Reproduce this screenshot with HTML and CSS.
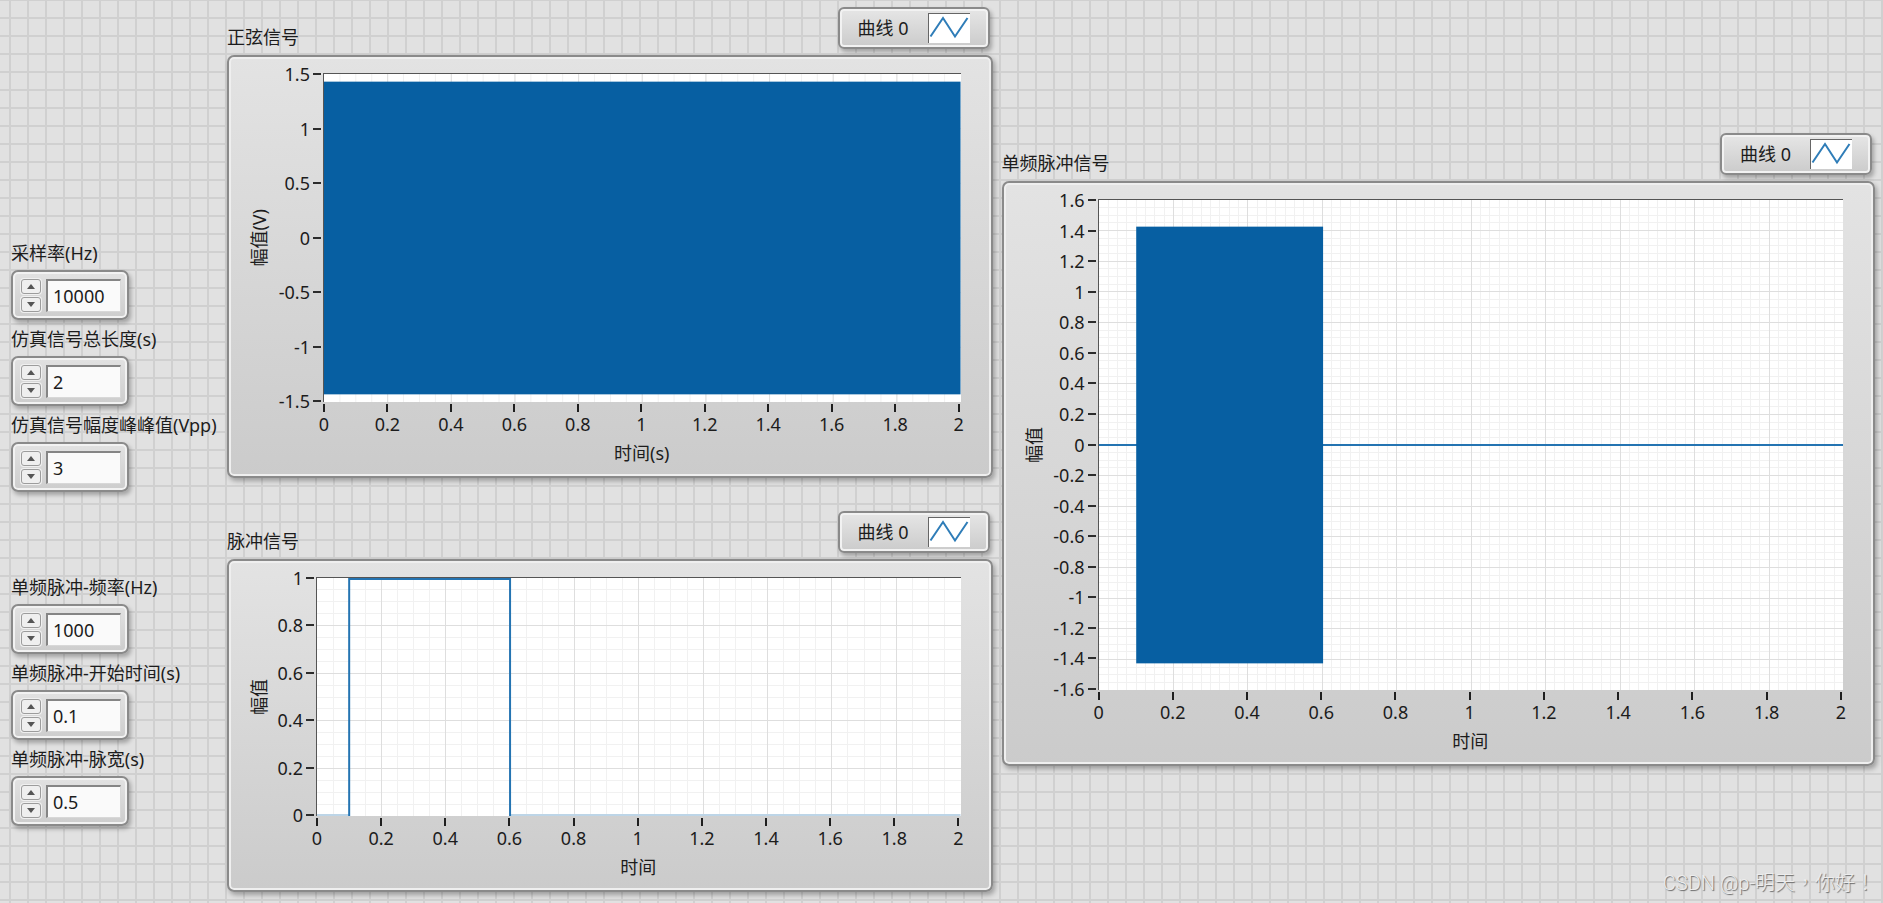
FILE: index.html
```html
<!DOCTYPE html>
<html lang="zh-CN">
<head>
<meta charset="utf-8">
<title>单频脉冲信号</title>
<link rel="stylesheet" href="styles.css">
</head>
<body>
<main class="front-panel">
  <form class="controls">
    <div class="control-group">
      <div class="control">
        <label for="rate">采样率(Hz)</label>
        <div class="numeric">
          <div class="spinner"><button type="button" class="up" aria-label="增加"></button><button type="button" class="down" aria-label="减少"></button></div>
          <input id="rate" type="text" value="10000">
        </div>
      </div>
      <div class="control">
        <label for="length">仿真信号总长度(s)</label>
        <div class="numeric">
          <div class="spinner"><button type="button" class="up" aria-label="增加"></button><button type="button" class="down" aria-label="减少"></button></div>
          <input id="length" type="text" value="2">
        </div>
      </div>
      <div class="control">
        <label for="vpp">仿真信号幅度峰峰值(Vpp)</label>
        <div class="numeric">
          <div class="spinner"><button type="button" class="up" aria-label="增加"></button><button type="button" class="down" aria-label="减少"></button></div>
          <input id="vpp" type="text" value="3">
        </div>
      </div>
    </div>
    <div class="control-group">
      <div class="control">
        <label for="freq">单频脉冲-频率(Hz)</label>
        <div class="numeric">
          <div class="spinner"><button type="button" class="up" aria-label="增加"></button><button type="button" class="down" aria-label="减少"></button></div>
          <input id="freq" type="text" value="1000">
        </div>
      </div>
      <div class="control">
        <label for="start">单频脉冲-开始时间(s)</label>
        <div class="numeric">
          <div class="spinner"><button type="button" class="up" aria-label="增加"></button><button type="button" class="down" aria-label="减少"></button></div>
          <input id="start" type="text" value="0.1">
        </div>
      </div>
      <div class="control">
        <label for="width">单频脉冲-脉宽(s)</label>
        <div class="numeric">
          <div class="spinner"><button type="button" class="up" aria-label="增加"></button><button type="button" class="down" aria-label="减少"></button></div>
          <input id="width" type="text" value="0.5">
        </div>
      </div>
    </div>
  </form>

  <div class="column">
    <section class="graph graph-sine">
      <header class="graph-head">
        <h2>正弦信号</h2>
        <div class="legend"><span>曲线 0</span><svg class="legend-line" viewBox="0 0 41 29" aria-hidden="true"><path d="M1.500 22.500L14 4L26 22.500L38.500 4"/></svg></div>
      </header>
      <div class="chart">
        <div class="y-title"><span>幅值(V)</span></div>
        <div class="y-axis"><span>1.5</span><span>1</span><span>0.5</span><span>0</span><span>-0.5</span><span>-1</span><span>-1.5</span></div>
        <div class="plot">
          <svg viewBox="0 0 2000 3000" preserveAspectRatio="none" data-x-minor="50" data-x-major="200" data-y-minor="100" data-y-major="500">
            <rect class="burst" x="0" y="70" width="2000" height="2860"/>
          </svg>
        </div>
        <div class="x-axis"><span>0</span><span>0.2</span><span>0.4</span><span>0.6</span><span>0.8</span><span>1</span><span>1.2</span><span>1.4</span><span>1.6</span><span>1.8</span><span>2</span></div>
        <div class="x-title">时间(s)</div>
      </div>
    </section>

    <section class="graph graph-pulse">
      <header class="graph-head">
        <h2>脉冲信号</h2>
        <div class="legend"><span>曲线 0</span><svg class="legend-line" viewBox="0 0 41 29" aria-hidden="true"><path d="M1.500 22.500L14 4L26 22.500L38.500 4"/></svg></div>
      </header>
      <div class="chart">
        <div class="y-title"><span>幅值</span></div>
        <div class="y-axis"><span>1</span><span>0.8</span><span>0.6</span><span>0.4</span><span>0.2</span><span>0</span></div>
        <div class="plot">
          <svg viewBox="0 0 2000 1000" preserveAspectRatio="none" data-x-minor="50" data-x-major="200" data-y-minor="50" data-y-major="200">
            <path class="base" d="M0 996H100M600 996H2000"/>
            <path class="trace" d="M100 1000V4H600V1000"/>
          </svg>
        </div>
        <div class="x-axis"><span>0</span><span>0.2</span><span>0.4</span><span>0.6</span><span>0.8</span><span>1</span><span>1.2</span><span>1.4</span><span>1.6</span><span>1.8</span><span>2</span></div>
        <div class="x-title">时间</div>
      </div>
    </section>
  </div>

  <div class="column column-result">
    <section class="graph graph-burst">
      <header class="graph-head">
        <h2>单频脉冲信号</h2>
        <div class="legend"><span>曲线 0</span><svg class="legend-line" viewBox="0 0 41 29" aria-hidden="true"><path d="M1.500 22.500L14 4L26 22.500L38.500 4"/></svg></div>
      </header>
      <div class="chart">
        <div class="y-title"><span>幅值</span></div>
        <div class="y-axis"><span>1.6</span><span>1.4</span><span>1.2</span><span>1</span><span>0.8</span><span>0.6</span><span>0.4</span><span>0.2</span><span>0</span><span>-0.2</span><span>-0.4</span><span>-0.6</span><span>-0.8</span><span>-1</span><span>-1.2</span><span>-1.4</span><span>-1.6</span></div>
        <div class="plot">
          <svg viewBox="0 0 2000 3200" preserveAspectRatio="none" data-x-minor="25" data-x-major="200" data-y-minor="50" data-y-major="200">
            <path class="trace" d="M0 1600H2000"/>
            <rect class="burst" x="100" y="174" width="502" height="2852"/>
          </svg>
        </div>
        <div class="x-axis"><span>0</span><span>0.2</span><span>0.4</span><span>0.6</span><span>0.8</span><span>1</span><span>1.2</span><span>1.4</span><span>1.6</span><span>1.8</span><span>2</span></div>
        <div class="x-title">时间</div>
      </div>
    </section>
  </div>
</main>
<footer class="signature" lang="zh-TW">CSDN @p-明天，你好！</footer>
<script src="grid.js"></script>
</body>
</html>
```
FILE: styles.css
```css
* {
  box-sizing: border-box;
}

body {
  margin: 0;
  min-height: 100vh;
  color: #1c1c1c;
  font-family: "Noto Sans", "Noto Sans CJK SC", sans-serif;
  font-size: 18px;
  line-height: 24px;
  background-color: #e1e1e1;
  background-image:
    linear-gradient(90deg, #d0d0d0 2px, transparent 2px),
    linear-gradient(#d0d0d0 2px, transparent 2px);
  background-size: 18px 18px;
  background-position: 9px 17px;
}

.front-panel {
  display: grid;
  grid-template-columns: 207px minmax(0, 766fr) minmax(0, 874fr);
  column-gap: 9px;
  padding: 0 8px 0 11px;
}

/* Numeric controls */

.controls {
  display: flex;
  flex-direction: column;
  gap: 83px;
  padding-top: 241px;
}

.control-group {
  display: flex;
  flex-direction: column;
  gap: 7px;
}

.control {
  display: flex;
  flex-direction: column;
  align-items: flex-start;
  gap: 5px;
}

.control label {
  white-space: nowrap;
}

.numeric {
  display: flex;
  gap: 5px;
  width: 118px;
  height: 50px;
  padding: 7px 6px 6px 8px;
  border: 2px solid #8a8a8a;
  border-radius: 7px;
  background: linear-gradient(#e2e2e2, #cdcdcd);
  box-shadow: inset 0 0 0 2px #f2f2f2, 2px 3px 4px rgba(0, 0, 0, 0.28);
}

.spinner {
  display: flex;
  flex-direction: column;
  gap: 3px;
  width: 20px;
}

.spinner button {
  display: flex;
  flex: 1;
  align-items: center;
  justify-content: center;
  padding: 0;
  border: 1px solid #9c9c9c;
  border-radius: 3px;
  background: #efefef;
  box-shadow: 0 0 0 1px #f0f0f0;
}

.spinner button::before {
  content: "";
  border: 4px solid transparent;
}

.spinner .up::before {
  border-top: 0;
  border-bottom: 5px solid #555;
}

.spinner .down::before {
  border-top: 5px solid #555;
  border-bottom: 0;
}

.numeric input {
  flex: 1;
  min-width: 0;
  padding: 0 5px;
  border: 1px solid #d8d8d8;
  border-top: 2px solid #858585;
  border-left: 2px solid #858585;
  background: #fafafa;
  color: inherit;
  font: inherit;
}

/* Graphs */

.column {
  display: flex;
  flex-direction: column;
  gap: 33px;
  padding-top: 7px;
}

.column-result {
  padding-top: 133px;
}

.graph {
  display: flex;
  flex-direction: column;
  gap: 6px;
}

.graph-head {
  display: flex;
  align-items: flex-end;
  justify-content: space-between;
  padding-right: 3px;
}

.graph-head h2 {
  margin: 0;
  font-size: 18px;
  font-weight: 400;
}

.legend {
  display: flex;
  align-items: center;
  justify-content: space-between;
  width: 152px;
  height: 42px;
  padding: 0 18px 1px 18px;
  border: 2px solid #8a8a8a;
  border-radius: 6px;
  background: linear-gradient(#e6e6e6, #cbcbcb);
  box-shadow: inset 0 0 0 2px #f2f2f2, 2px 3px 4px rgba(0, 0, 0, 0.28);
}

.legend-line {
  width: 42px;
  height: 30px;
  border-top: 1px solid #666;
  border-left: 1px solid #666;
  background: #fff;
}

.legend-line path {
  fill: none;
  stroke: #2f7db8;
  stroke-width: 2;
}

.chart {
  display: grid;
  grid-template-columns: 24px 52px minmax(0, 1fr);
  grid-template-rows: auto 39px 24px;
  padding: 16px 30px 11px 18px;
  border: 2px solid #8a8a8a;
  border-radius: 7px;
  background: linear-gradient(#e3e3e3, #cbcbcb);
  box-shadow: inset 0 0 0 2px #efefef, 2px 3px 5px rgba(0, 0, 0, 0.3);
}

.graph-pulse .chart {
  grid-template-columns: 24px 45px minmax(0, 1fr);
}

.y-title {
  display: flex;
  align-items: center;
  justify-content: center;
}

.y-title span {
  writing-mode: vertical-rl;
  text-orientation: sideways;
  transform: rotate(180deg);
  white-space: nowrap;
}

.y-axis {
  display: flex;
  flex-direction: column;
  justify-content: space-between;
  padding: 1px 2px 1px 0;
}

.y-axis span {
  display: flex;
  align-items: center;
  justify-content: flex-end;
  gap: 3px;
  height: 0;
}

.y-axis span::after {
  content: "";
  width: 8px;
  height: 2px;
  background: #2c2c2c;
}

.plot {
  height: 329px;
  border-top: 1px solid #555;
  border-left: 1px solid #555;
  background: #fff;
}

.graph-pulse .plot {
  height: 239px;
}

.graph-burst .plot {
  height: 491px;
}

.plot svg {
  display: block;
  width: 100%;
  height: 100%;
}

.plot path {
  fill: none;
  vector-effect: non-scaling-stroke;
}

.grid-minor {
  stroke: #f1f1f1;
  stroke-width: 1px;
  shape-rendering: crispEdges;
}

.grid-major {
  stroke: #dedede;
  stroke-width: 1px;
  shape-rendering: crispEdges;
}

.trace {
  stroke: #2474b2;
  stroke-width: 2px;
}

.base {
  stroke: #bdd5e7;
  stroke-width: 2px;
}

.burst {
  fill: #075fa2;
}

.x-axis {
  grid-column: 3;
  display: flex;
  justify-content: space-between;
  padding: 2px 2px 0 1px;
}

.x-axis span {
  display: flex;
  flex-direction: column;
  align-items: center;
  width: 0;
}

.x-axis span::before {
  content: "";
  width: 2px;
  height: 8px;
  background: #1f1f1f;
}

.x-title {
  grid-column: 3;
  text-align: center;
}

.signature {
  position: absolute;
  right: 8px;
  bottom: 8px;
  color: #ededed;
  font-family: Roboto, "Noto Sans CJK TC", sans-serif;
  font-size: 20px;
  font-weight: 300;
  text-shadow: 1px 1px 1px #666;
}
```
FILE: grid.js
```js
// Adds the minor and major grid lines behind each trace, in the plot's own units.
function gridPath(width, height, stepX, stepY, className) {
  const path = document.createElementNS("http://www.w3.org/2000/svg", "path");
  let d = "";
  for (let x = stepX; x < width; x += stepX) d += `M${x} 0V${height}`;
  for (let y = stepY; y < height; y += stepY) d += `M0 ${y}H${width}`;
  path.setAttribute("d", d);
  path.setAttribute("class", className);
  return path;
}

document.querySelectorAll(".plot svg").forEach((svg) => {
  const { width, height } = svg.viewBox.baseVal;
  const { xMinor, xMajor, yMinor, yMajor } = svg.dataset;
  svg.prepend(
    gridPath(width, height, +xMinor, +yMinor, "grid-minor"),
    gridPath(width, height, +xMajor, +yMajor, "grid-major")
  );
});
```
